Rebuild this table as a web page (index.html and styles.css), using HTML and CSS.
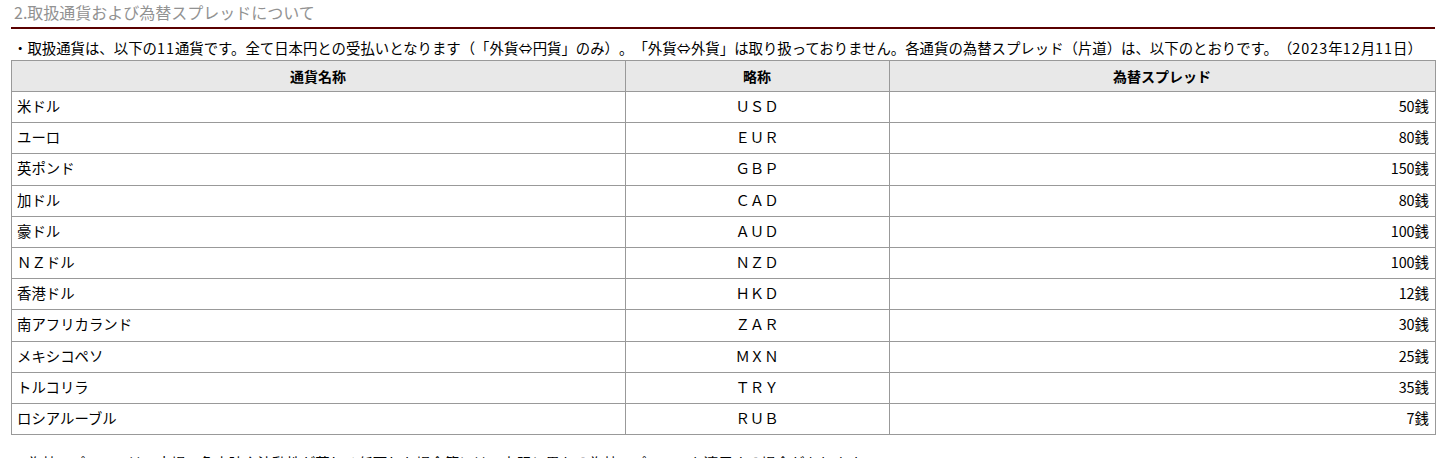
FILE: index.html
```html
<!DOCTYPE html>
<html lang="ja">
<head>
<meta charset="utf-8">
<title>取扱通貨および為替スプレッド</title>
<link rel="stylesheet" href="styles.css">
</head>
<body>
<div class="section">
  <h2 class="section-title">2.取扱通貨および為替スプレッドについて</h2>
  <p class="note">・取扱通貨は、以下の<span class="digits">11</span>通貨です。全て日本円との受払いとなります（「外貨⇔円貨」のみ）。「外貨⇔外貨」は取り扱っておりません。各通貨の為替スプレッド（片道）は、以下のとおりです。（<span class="digits">2023</span>年<span class="digits">12</span>月<span class="digits">11</span>日）</p>
  <table class="spread-table">
    <colgroup>
      <col class="c-name">
      <col class="c-code">
      <col class="c-spread">
    </colgroup>
    <thead>
      <tr><th>通貨名称</th><th>略称</th><th>為替スプレッド</th></tr>
    </thead>
    <tbody>
      <tr><td>米ドル</td><td class="code">ＵＳＤ</td><td class="num">50銭</td></tr>
      <tr><td>ユーロ</td><td class="code">ＥＵＲ</td><td class="num">80銭</td></tr>
      <tr><td>英ポンド</td><td class="code">ＧＢＰ</td><td class="num">150銭</td></tr>
      <tr><td>加ドル</td><td class="code">ＣＡＤ</td><td class="num">80銭</td></tr>
      <tr><td>豪ドル</td><td class="code">ＡＵＤ</td><td class="num">100銭</td></tr>
      <tr><td>ＮＺドル</td><td class="code">ＮＺＤ</td><td class="num">100銭</td></tr>
      <tr><td>香港ドル</td><td class="code">ＨＫＤ</td><td class="num">12銭</td></tr>
      <tr><td>南アフリカランド</td><td class="code">ＺＡＲ</td><td class="num">30銭</td></tr>
      <tr><td>メキシコペソ</td><td class="code">ＭＸＮ</td><td class="num">25銭</td></tr>
      <tr><td>トルコリラ</td><td class="code">ＴＲＹ</td><td class="num">35銭</td></tr>
      <tr><td>ロシアルーブル</td><td class="code">ＲＵＢ</td><td class="num">7銭</td></tr>
    </tbody>
  </table>
  <p class="note after">・為替スプレッドは、市場の急変時や流動性が著しく低下した場合等には、上記と異なる為替スプレッドを適用する場合があります。</p>
</div>
</body>
</html>
```

FILE: styles.css
```css
html, body {
  margin: 0;
  padding: 0;
  background: #ffffff;
}
body {
  font-family: "Noto Sans CJK JP", "Noto Sans", sans-serif;
  color: #000000;
  text-spacing-trim: space-all;
}
.section {
  width: 1424px;
  margin-left: 11px;
}
.section-title {
  margin: 0;
  padding: 2px 0 5px 3px;
  font-size: 16px;
  font-weight: normal;
  line-height: 20px;
  color: #929292;
  border-bottom: 2px solid #5a0000;
}
.note {
  margin: 0;
  padding: 10px 0 3px 2px;
  font-size: 14.4px;
  line-height: 18px;
  white-space: nowrap;
  text-spacing-trim: space-all;
}
.digits {
  letter-spacing: 1px;
}
.note.after {
  padding-top: 19px;
}
.spread-table {
  width: 1424px;
  border-collapse: collapse;
  table-layout: fixed;
  font-size: 14.4px;
}
.c-name { width: 614px; }
.c-code { width: 264px; }
.c-spread { width: 546px; }
.spread-table th,
.spread-table td {
  border: 1px solid #999999;
  padding: 5px 6px 5px 5px;
  line-height: 20px;
}
.spread-table th {
  font-size: 14px;
}
.spread-table td {
  line-height: 20.2px;
  padding-top: 4px;
  padding-bottom: 6px;
}
.spread-table th {
  background: #e8e8e8;
  font-weight: bold;
  text-align: center;
}
.spread-table td.code {
  text-align: center;
}
.spread-table td.num {
  text-align: right;
}
```
